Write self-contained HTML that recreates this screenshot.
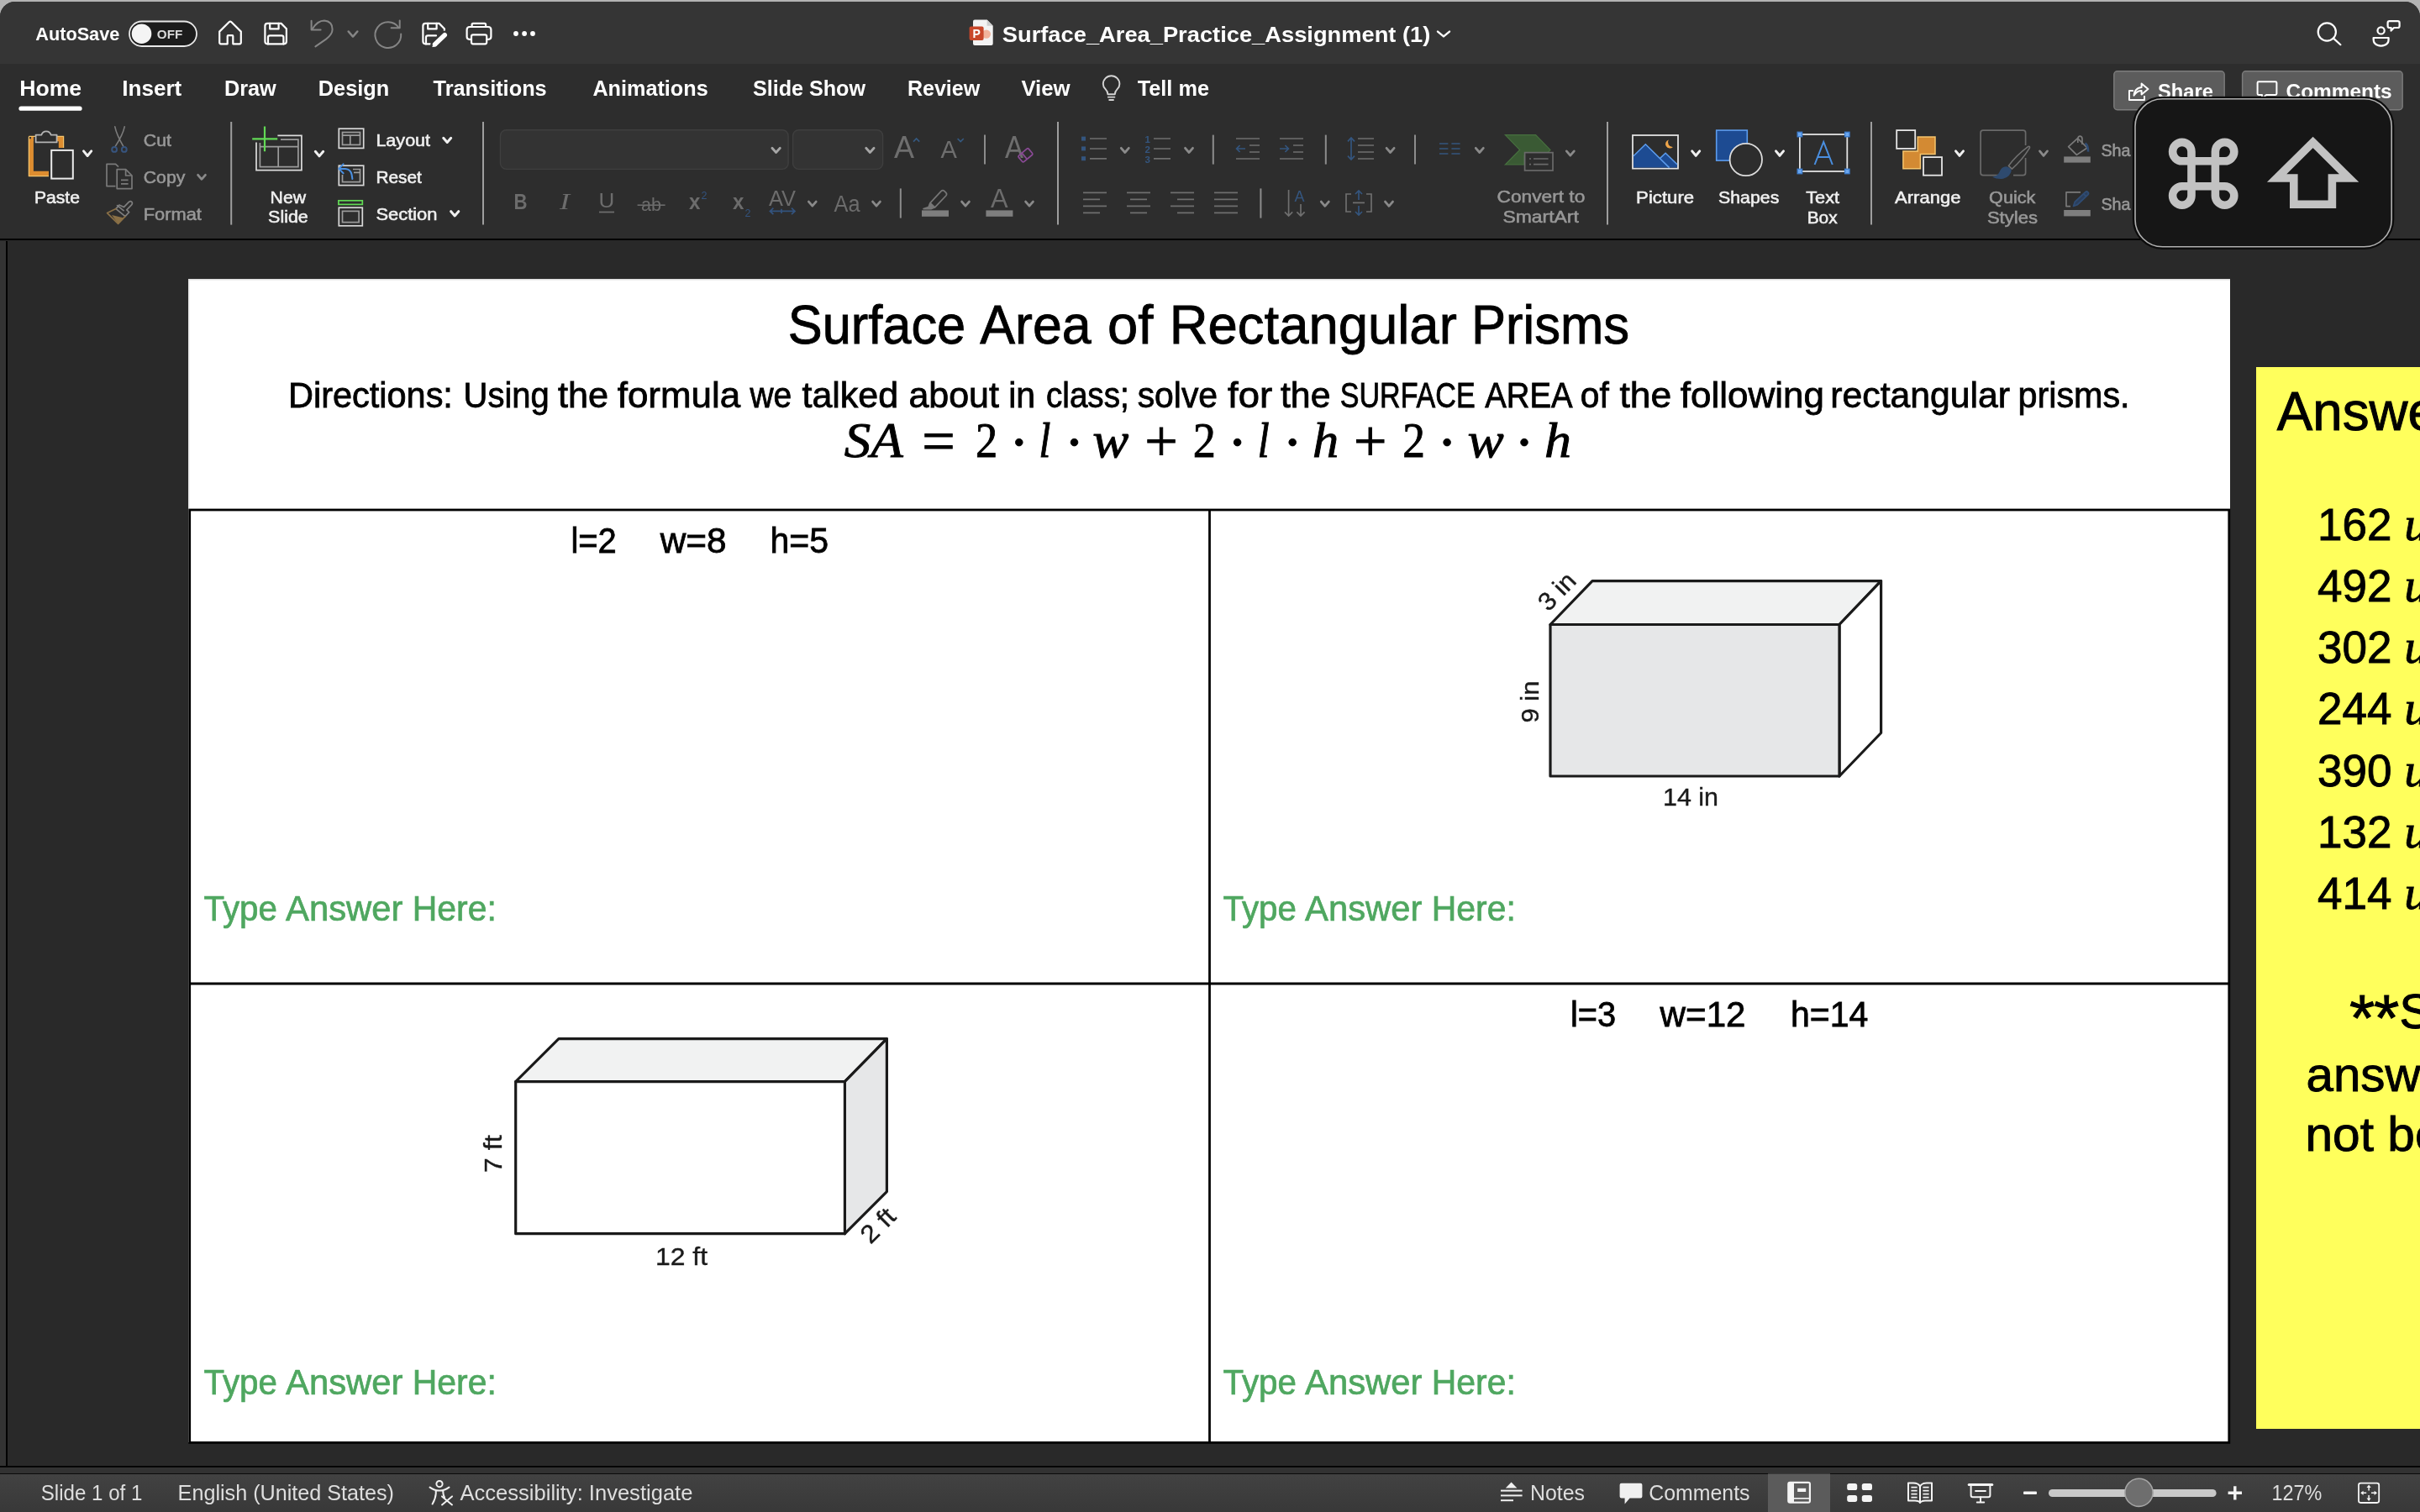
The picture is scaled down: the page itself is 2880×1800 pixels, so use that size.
<!DOCTYPE html>
<html lang="en">
<head>
<meta charset="utf-8">
<title>Surface_Area_Practice_Assignment (1)</title>
<style>
html,body{margin:0;padding:0;}
body{width:2880px;height:1800px;overflow:hidden;background:#b4b4b4;font-family:"Liberation Sans",sans-serif;position:relative;}
#win{position:absolute;left:0;top:2px;width:2880px;height:1798px;background:#292929;border-radius:18px 18px 0 0;overflow:hidden;}
#titlebar{position:absolute;left:0;top:0;width:2880px;height:74px;background:#353535;}
#ribbon{position:absolute;left:0;top:74px;width:2880px;height:208px;background:#2d2d2d;}
#ribbonline{position:absolute;left:0;top:282px;width:2880px;height:2px;background:#000;}
#canvas{position:absolute;left:0;top:284px;width:2880px;height:1460px;background:#292929;}
#leftstrip{position:absolute;left:0;top:285px;width:7px;height:1460px;background:#333;}
#leftline{position:absolute;left:7px;top:285px;width:2px;height:1460px;background:#000;}
#slide{position:absolute;left:224px;top:330px;width:2430px;height:1385px;background:#fff;box-shadow:0 1.5px 0 0 #dedede inset, 1.5px 0 0 0 #e4e4e4 inset;}
#answers{position:absolute;left:2685px;top:435px;width:195px;height:1264px;background:#ffff5c;}
#canvasline{position:absolute;left:0;top:1742.5px;width:2880px;height:2px;background:#050505;}
#statusgap{position:absolute;left:0;top:1744.5px;width:2880px;height:8px;background:#323232;border-bottom:1.5px solid #0a0a0a;box-sizing:border-box;}
#statusbar{position:absolute;left:0;top:1752.5px;width:2880px;height:46px;background:linear-gradient(#424242,#383838);}
#ov{position:absolute;left:0;top:0;width:2880px;height:1800px;will-change:transform;}
text{font-family:"Liberation Sans",sans-serif;}
.lbl{font-size:20.4px;fill:#f0f0f0;stroke:#f0f0f0;stroke-width:.55px;}
.dis{fill:#989898;stroke:#989898;}
.sep{stroke:#9e9e9e;stroke-width:2;}
.ssep{stroke:#8c8c8c;stroke-width:2;}
.chev{fill:none;stroke:#f0f0f0;stroke-width:3;stroke-linecap:round;stroke-linejoin:round;}
.chevd{fill:none;stroke:#8a8a8a;stroke-width:2.8;stroke-linecap:round;stroke-linejoin:round;}
.ser{font-family:"Liberation Serif",serif;}
.b{font-weight:700;}
.i{font-style:italic;}
</style>
</head>
<body>
<div id="win">
  <div id="titlebar"></div>
  <div id="ribbon"></div>
  <div id="ribbonline"></div>
  <div id="canvas"></div>
  <div id="leftstrip"></div>
  <div id="leftline"></div>
  <div id="slide"></div>
  <div id="answers"></div>
  <div id="canvasline"></div>
  <div id="statusgap"></div>
  <div id="statusbar"></div>
</div>
<svg id="ov" width="2880" height="1800" viewBox="0 0 2880 1800">
<defs><clipPath id="clipAns"><rect x="2685" y="437" width="195" height="1264"/></clipPath></defs>
<!--SLIDE-->
<g id="slidecontent">
  <!-- table -->
  <g fill="none" stroke="#000" stroke-width="2.8">
    <rect x="225.7" y="607" width="2427.1" height="1110.4"/>
    <line x1="1439.5" y1="607" x2="1439.5" y2="1717"/>
    <line x1="226" y1="1171" x2="2653" y2="1171"/>
  </g>
  <g stroke="#000" stroke-width=".9">
  <text x="937.8" y="409.4" font-size="64.5" textLength="211.4" lengthAdjust="spacingAndGlyphs">Surface</text>
  <text x="1166.3" y="409.4" font-size="64.5" textLength="132.4" lengthAdjust="spacingAndGlyphs">Area</text>
  <text x="1318.0" y="409.4" font-size="64.5" textLength="54.3" lengthAdjust="spacingAndGlyphs">of</text>
  <text x="1391.7" y="409.4" font-size="64.5" textLength="342.1" lengthAdjust="spacingAndGlyphs">Rectangular</text>
  <text x="1750.9" y="409.4" font-size="64.5" textLength="188.2" lengthAdjust="spacingAndGlyphs">Prisms</text>
  </g>
  <g stroke="#000" stroke-width=".8">
  <text x="343.0" y="484.5" font-size="41.6" textLength="195.9" lengthAdjust="spacingAndGlyphs">Directions:</text>
  <text x="551.6" y="484.5" font-size="41.6" textLength="102.2" lengthAdjust="spacingAndGlyphs">Using</text>
  <text x="664.0" y="484.5" font-size="41.6" textLength="60.1" lengthAdjust="spacingAndGlyphs">the</text>
  <text x="734.7" y="484.5" font-size="41.6" textLength="146.4" lengthAdjust="spacingAndGlyphs">formula</text>
  <text x="892.5" y="484.5" font-size="41.6" textLength="49.7" lengthAdjust="spacingAndGlyphs">we</text>
  <text x="954.5" y="484.5" font-size="41.6" textLength="114.6" lengthAdjust="spacingAndGlyphs">talked</text>
  <text x="1081.4" y="484.5" font-size="41.6" textLength="107.5" lengthAdjust="spacingAndGlyphs">about</text>
  <text x="1200.2" y="484.5" font-size="41.6" textLength="31.9" lengthAdjust="spacingAndGlyphs">in</text>
  <text x="1245.0" y="484.5" font-size="41.6" textLength="98.7" lengthAdjust="spacingAndGlyphs">class;</text>
  <text x="1353.7" y="484.5" font-size="41.6" textLength="95.4" lengthAdjust="spacingAndGlyphs">solve</text>
  <text x="1461.1" y="484.5" font-size="41.6" textLength="53.0" lengthAdjust="spacingAndGlyphs">for</text>
  <text x="1524.0" y="484.5" font-size="41.6" textLength="59.4" lengthAdjust="spacingAndGlyphs">the</text>
  <text x="1594.7" y="484.5" font-size="41.6" textLength="161.0" lengthAdjust="spacingAndGlyphs">SURFACE</text>
  <text x="1767.2" y="484.5" font-size="41.6" textLength="104.3" lengthAdjust="spacingAndGlyphs">AREA</text>
  <text x="1880.8" y="484.5" font-size="41.6" textLength="34.0" lengthAdjust="spacingAndGlyphs">of</text>
  <text x="1927.5" y="484.5" font-size="41.6" textLength="61.7" lengthAdjust="spacingAndGlyphs">the</text>
  <text x="1999.8" y="484.5" font-size="41.6" textLength="171.2" lengthAdjust="spacingAndGlyphs">following</text>
  <text x="2178.3" y="484.5" font-size="41.6" textLength="213.8" lengthAdjust="spacingAndGlyphs">rectangular</text>
  <text x="2401.5" y="484.5" font-size="41.6" textLength="133.1" lengthAdjust="spacingAndGlyphs">prisms.</text>
  <text x="679.4" y="657.6" font-size="42" textLength="54.4" lengthAdjust="spacingAndGlyphs">l=2</text>
  <text x="785.7" y="657.6" font-size="42" textLength="78.8" lengthAdjust="spacingAndGlyphs">w=8</text>
  <text x="916.4" y="657.6" font-size="42" textLength="69.6" lengthAdjust="spacingAndGlyphs">h=5</text>
  <text x="1868.9" y="1221.5" font-size="42" textLength="54.2" lengthAdjust="spacingAndGlyphs">l=3</text>
  <text x="1975.6" y="1221.5" font-size="42" textLength="101.9" lengthAdjust="spacingAndGlyphs">w=12</text>
  <text x="2130.9" y="1221.5" font-size="42" textLength="92.4" lengthAdjust="spacingAndGlyphs">h=14</text>
  </g>
  <g stroke="#000" stroke-width=".9">
    <text class="ser i" x="1004.7" y="544" font-size="59" textLength="70.0" lengthAdjust="spacingAndGlyphs">SA</text>
  <text class="ser" x="1117.1" y="549.4" font-size="70" text-anchor="middle">=</text>
  <text class="ser" x="1160.9" y="544" font-size="59" textLength="26.2" lengthAdjust="spacingAndGlyphs">2</text>
  <circle cx="1212.8" cy="526.6" r="4.3"/>
  <text class="ser i" x="1236.3" y="544" font-size="59" textLength="14.2" lengthAdjust="spacingAndGlyphs">l</text>
  <circle cx="1278.5" cy="526.6" r="4.3"/>
  <text class="ser i" x="1300.2" y="544" font-size="59" textLength="43.1" lengthAdjust="spacingAndGlyphs">w</text>
  <text class="ser" x="1381.9" y="549.4" font-size="70" text-anchor="middle">+</text>
  <text class="ser" x="1419.8" y="544" font-size="59" textLength="27.1" lengthAdjust="spacingAndGlyphs">2</text>
  <circle cx="1472.6" cy="526.6" r="4.3"/>
  <text class="ser i" x="1496.5" y="544" font-size="59" textLength="14.2" lengthAdjust="spacingAndGlyphs">l</text>
  <circle cx="1538.2" cy="526.6" r="4.3"/>
  <text class="ser i" x="1562.1" y="544" font-size="59" textLength="31.2" lengthAdjust="spacingAndGlyphs">h</text>
  <text class="ser" x="1630.8" y="549.4" font-size="70" text-anchor="middle">+</text>
  <text class="ser" x="1669.2" y="544" font-size="59" textLength="26.7" lengthAdjust="spacingAndGlyphs">2</text>
  <circle cx="1722.1" cy="526.6" r="4.3"/>
  <text class="ser i" x="1746.4" y="544" font-size="59" textLength="43.2" lengthAdjust="spacingAndGlyphs">w</text>
  <circle cx="1814.0" cy="526.6" r="4.3"/>
  <text class="ser i" x="1837.9" y="544" font-size="59" textLength="32.0" lengthAdjust="spacingAndGlyphs">h</text>
  </g>
  <g fill="#4fa760" stroke="#4fa760" stroke-width=".7" font-size="41.6">
    <text x="242.5" y="1095.7" textLength="87.4" lengthAdjust="spacingAndGlyphs">Type</text>
    <text x="340.0" y="1095.7" textLength="139.4" lengthAdjust="spacingAndGlyphs">Answer</text>
    <text x="490.8" y="1095.7" textLength="100.1" lengthAdjust="spacingAndGlyphs">Here:</text>
    <text x="1455.5" y="1095.7" textLength="87.4" lengthAdjust="spacingAndGlyphs">Type</text>
    <text x="1553.0" y="1095.7" textLength="139.4" lengthAdjust="spacingAndGlyphs">Answer</text>
    <text x="1703.8" y="1095.7" textLength="100.1" lengthAdjust="spacingAndGlyphs">Here:</text>
    <text x="242.5" y="1659.5" textLength="87.4" lengthAdjust="spacingAndGlyphs">Type</text>
    <text x="340.0" y="1659.5" textLength="139.4" lengthAdjust="spacingAndGlyphs">Answer</text>
    <text x="490.8" y="1659.5" textLength="100.1" lengthAdjust="spacingAndGlyphs">Here:</text>
    <text x="1455.5" y="1659.5" textLength="87.4" lengthAdjust="spacingAndGlyphs">Type</text>
    <text x="1553.0" y="1659.5" textLength="139.4" lengthAdjust="spacingAndGlyphs">Answer</text>
    <text x="1703.8" y="1659.5" textLength="100.1" lengthAdjust="spacingAndGlyphs">Here:</text>
  </g>
</g>
<g id="prisms" stroke="#1a1a1a" stroke-width="3.2" stroke-linejoin="round">
  <!-- prism 1 (top-right cell) -->
  <polygon points="1845,743.5 1895,691.7 2238.6,691.7 2189,743.5" fill="#f1f2f2"/>
  <polygon points="2189,743.5 2238.6,691.7 2238.6,872.5 2189,924" fill="#ffffff"/>
  <rect x="1845" y="743.5" width="344" height="180.5" fill="#e6e7e8"/>
  <!-- prism 2 (bottom-left cell) -->
  <polygon points="613.7,1287.6 664.9,1236.7 1055.4,1236.7 1005.4,1287.6" fill="#f1f2f2"/>
  <polygon points="1005.4,1287.6 1055.4,1236.7 1055.4,1418.6 1005.4,1468.7" fill="#e6e7e8"/>
  <rect x="613.7" y="1287.6" width="391.7" height="181.1" fill="#ffffff"/>
</g>
<g id="prismlabels" fill="#1a1a1a" stroke="#1a1a1a" stroke-width=".4" font-size="30" text-anchor="middle">
  <text x="2012" y="959.2" textLength="66" lengthAdjust="spacingAndGlyphs">14 in</text>
  <text transform="translate(1830.5,835.5) rotate(-90)" textLength="50" lengthAdjust="spacingAndGlyphs">9 in</text>
  <text transform="translate(1860,711) rotate(-46)" textLength="50" lengthAdjust="spacingAndGlyphs">3 in</text>
  <text x="811" y="1506" textLength="62" lengthAdjust="spacingAndGlyphs">12 ft</text>
  <text transform="translate(596.5,1373.8) rotate(-90)" textLength="45" lengthAdjust="spacingAndGlyphs">7 ft</text>
  <text transform="translate(1052,1466) rotate(-45)" textLength="45" lengthAdjust="spacingAndGlyphs">2 ft</text>
</g>
<g id="answerstext" clip-path="url(#clipAns)" stroke="#000" stroke-width=".9">
  <text x="2709.8" y="512.3" font-size="64.5" stroke-width="1" textLength="262" lengthAdjust="spacingAndGlyphs">Answers:</text>
  <g font-size="53">
    <text x="2758" y="642.7">162 <tspan class="ser i" font-size="58">u</tspan></text>
    <text x="2758" y="715.9">492 <tspan class="ser i" font-size="58">u</tspan></text>
    <text x="2758" y="789.1">302 <tspan class="ser i" font-size="58">u</tspan></text>
    <text x="2758" y="862.3">244 <tspan class="ser i" font-size="58">u</tspan></text>
    <text x="2758" y="935.5">390 <tspan class="ser i" font-size="58">u</tspan></text>
    <text x="2758" y="1008.7">132 <tspan class="ser i" font-size="58">u</tspan></text>
    <text x="2758" y="1081.9">414 <tspan class="ser i" font-size="58">u</tspan></text>
  </g>
  <g font-size="57">
    <text x="2796" y="1239" font-size="78">*</text>
    <text x="2825" y="1239" font-size="78">*</text>
    <text x="2855.6" y="1224.4">Some</text>
    <text x="2744.5" y="1298.8" textLength="217" lengthAdjust="spacingAndGlyphs">answers</text>
    <text x="2743.5" y="1370.2" textLength="163" lengthAdjust="spacingAndGlyphs">not be</text>
  </g>
</g>
<g id="titlebaricons" fill="none" stroke="#fff" stroke-width="2.2" stroke-linecap="round" stroke-linejoin="round">
  <text x="42.3" y="47.9" font-size="22.5" class="b" fill="#fff" stroke="none" textLength="100" lengthAdjust="spacingAndGlyphs">AutoSave</text>
  <!-- toggle -->
  <rect x="154" y="25.5" width="80" height="29.5" rx="14.75" fill="#1c1c1c" stroke="#e8e8e8" stroke-width="1.8"/>
  <circle cx="168.5" cy="40.2" r="11.8" fill="#f4f4f4" stroke="none"/>
  <text x="186.8" y="46" font-size="15.5" class="b" fill="#d8d8d8" stroke="none" textLength="30.5" lengthAdjust="spacingAndGlyphs">OFF</text>
  <!-- home -->
  <path d="M261.2 37.6 L272.6 26.2 Q274 24.9 275.4 26.2 L286.8 37.6 V50.6 Q286.8 52.3 285.1 52.3 H277.3 V42.9 Q277.3 42.1 276.5 42.1 H271.5 Q270.7 42.1 270.7 42.9 V52.3 H262.9 Q261.2 52.3 261.2 50.6 Z"/>
  <!-- save -->
  <path d="M318.4 27.9 H334.6 L340.9 34.2 V49.3 Q340.9 52.3 337.9 52.3 H318.4 Q315.4 52.3 315.4 49.3 V30.9 Q315.4 27.9 318.4 27.9 Z"/>
  <path d="M321.2 27.9 V34.4 H331.6 V27.9"/>
  <path d="M319 52.3 V44.6 Q319 42.4 321.2 42.4 H335.2 Q337.4 42.4 337.4 44.6 V52.3"/>
  <!-- undo (disabled) -->
  <g stroke="#858585" stroke-width="2">
    <path d="M370.6 24.8 V35.6 H381.6"/>
    <path d="M371.6 34.6 Q378 24.6 386 24.6 Q395.6 25.6 395.6 35 Q395.6 41 388 46.6 L375.4 55.4"/>
    <path d="M414.6 37.4 L420 43.6 L425.4 37.4" stroke-width="2.4"/>
    <path d="M475.7 24.6 V33.2 H465.6"/>
    <path d="M474.6 33 A15.4 15.4 0 1 0 477.2 40.4"/>
  </g>
  <!-- save as -->
  <path d="M517.4 52.3 H506.4 Q503.4 52.3 503.4 49.3 V30.9 Q503.4 27.9 506.4 27.9 H522.6 L528.9 34.2 V37.4"/>
  <path d="M509.2 27.9 V34.4 H519.6 V27.9"/>
  <path d="M507 52.3 V44.6 Q507 42.4 509.2 42.4 H519"/>
  <path d="M529.4 41.6 L517.2 53.2" stroke="#353535" stroke-width="10"/>
  <path d="M529.2 41.8 L517.6 52.8" stroke-width="5.6"/>
  <path d="M516.6 51.6 L514.8 55.6 L519 54.4 Z" fill="#fff" stroke-width="1"/>
  <!-- print -->
  <path d="M561.6 31.6 V29.4 Q561.6 27.9 563.1 27.9 H576.6 Q578.1 27.9 578.1 29.4 V31.6"/>
  <path d="M560.8 46.8 H558.6 Q555.6 46.8 555.6 43.8 V35.4 Q555.6 32 559 32 H581 Q584.4 32 584.4 35.4 V43.8 Q584.4 46.8 581.4 46.8 H579.4"/>
  <rect x="561" y="41.4" width="18.2" height="10.9" rx="2"/>
  <!-- dots -->
  <g fill="#fff" stroke="none"><circle cx="614" cy="40" r="2.9"/><circle cx="624.1" cy="40" r="2.9"/><circle cx="634" cy="40" r="2.9"/></g>
  <!-- doc icon -->
  <g stroke="none">
    <path d="M1160 23.6 H1174.6 L1181.7 30.8 V52 Q1181.7 54.1 1179.6 54.1 H1160 Q1158 54.1 1158 52 V25.6 Q1158 23.6 1160 23.6 Z" fill="#f3f3f3"/>
    <path d="M1174.6 23.6 L1181.7 30.8 H1174.6 Z" fill="#cfcfcf"/>
    <circle cx="1173.8" cy="40.6" r="5.2" fill="#f2b49c"/>
    <rect x="1153.6" y="31.6" width="17" height="16.4" rx="2" fill="#c8472a"/>
    <text x="1157.6" y="45.2" font-size="14" class="b" fill="#fff">P</text>
  </g>
  <text x="1192.8" y="49.7" font-size="26.5" class="b" fill="#fff" stroke="none" textLength="509.6" lengthAdjust="spacingAndGlyphs">Surface_Area_Practice_Assignment (1)</text>
  <path d="M1711 37.6 L1718 43.4 L1725 37.6" stroke-width="2.4"/>
  <!-- search -->
  <circle cx="2769.3" cy="38" r="10.6"/>
  <path d="M2777 45.6 L2785.4 53.2"/>
  <!-- person/comment -->
  <circle cx="2833.6" cy="36.4" r="4.1"/>
  <path d="M2824.6 45 H2842.6 Q2843.4 54.4 2833.6 54.6 Q2824 54.4 2824.6 45 Z"/>
  <path d="M2843.6 25.2 H2853.6 Q2855.6 25.2 2855.6 27.2 V31 Q2855.6 33 2853.6 33 H2849 L2845.6 36.6 V33 H2843.6 Q2841.6 33 2841.6 31 V27.2 Q2841.6 25.2 2843.6 25.2 Z" fill="#353535"/>
</g>
<g id="tabs" fill="#fff" font-size="25">
  <text class="b" x="23.2" y="113.8" textLength="74" lengthAdjust="spacingAndGlyphs">Home</text>
  <rect x="22.4" y="126.6" width="75.2" height="5.2" rx="2.6"/>
  <g class="b">
  <text x="145.2" y="113.8" textLength="71.1" lengthAdjust="spacingAndGlyphs">Insert</text>
  <text x="266.9" y="113.8" textLength="61.9" lengthAdjust="spacingAndGlyphs">Draw</text>
  <text x="378.8" y="113.8" textLength="84.5" lengthAdjust="spacingAndGlyphs">Design</text>
  <text x="515.6" y="113.8" textLength="135.1" lengthAdjust="spacingAndGlyphs">Transitions</text>
  <text x="705.4" y="113.8" textLength="137.3" lengthAdjust="spacingAndGlyphs">Animations</text>
  <text x="895.9" y="113.8" textLength="134.1" lengthAdjust="spacingAndGlyphs">Slide Show</text>
  <text x="1079.9" y="113.8" textLength="86.4" lengthAdjust="spacingAndGlyphs">Review</text>
  <text x="1215.4" y="113.8" textLength="58.3" lengthAdjust="spacingAndGlyphs">View</text>
  <text x="1353.7" y="113.8" textLength="85.3" lengthAdjust="spacingAndGlyphs">Tell me</text>
  </g>
  <!-- bulb -->
  <g fill="none" stroke="#d4d4d4" stroke-width="1.9" stroke-linecap="round" stroke-linejoin="round">
    <path d="M1318.4 112.2 Q1318.2 108.8 1315.6 106.2 Q1312.8 103.4 1312.8 100 A9.8 9.8 0 0 1 1332.4 100 Q1332.4 103.4 1329.6 106.2 Q1327 108.8 1326.8 112.2 Z"/>
    <path d="M1318.8 115.6 H1326.4 M1320.2 119 H1325"/>
  </g>
</g>
<g id="rb-clip">
  <!-- paste -->
  <defs><linearGradient id="og" x1="0" y1="0" x2="1" y2="0"><stop offset="0" stop-color="#f3bf63"/><stop offset=".25" stop-color="#d9872c"/><stop offset="1" stop-color="#e39a3a"/></linearGradient></defs>
  <path d="M55 165.3 H72.8 V176 M36.9 165.3 H40 M36.9 165.3 V206.7 H58" fill="none" stroke="#dd8d30" stroke-width="6"/>
  <path d="M34.4 162.4 V209.6 H58 M34.4 162.4 H42 M66 162.4 H75.6 V176" fill="none" stroke="#f5c56c" stroke-width="1.2"/>
  <path d="M42.6 169.4 V160.6 H49.4 A5.8 5.8 0 0 1 60.6 160.6 H67.6 V169.4 Z" fill="#2d2d2d" stroke="#b4b4b4" stroke-width="1.8" stroke-linejoin="round"/>
  <rect x="61.2" y="178.9" width="25.6" height="33.7" fill="#2d2d2d" stroke="#ebebeb" stroke-width="2"/>
  <path class="chev" d="M99.5 179.9 L104.1 185.5 L108.7 179.9"/>
  <text class="lbl" x="40.9" y="241.5" textLength="54.1" lengthAdjust="spacingAndGlyphs">Paste</text>
  <!-- cut -->
  <g fill="none" stroke="#7c7c7c" stroke-width="1.6" stroke-linecap="round">
    <path d="M136.8 150.8 Q138.6 160 147 174.6 M148.2 150.8 Q146.4 160 137 174.6"/>
    <circle cx="136.1" cy="177.9" r="2.9" stroke="#37547e" stroke-width="2"/>
    <circle cx="147.8" cy="177.9" r="2.9" stroke="#37547e" stroke-width="2"/>
  </g>
  <text class="lbl dis" x="170.8" y="173.5" textLength="33.1" lengthAdjust="spacingAndGlyphs">Cut</text>
  <!-- copy -->
  <g fill="none" stroke="#7a7a7a" stroke-width="1.7" stroke-linejoin="round">
    <path d="M137.4 221.6 H127 V195.4 H137.6 L141 198.6"/>
    <path d="M139.2 201.6 H149.6 L157 209 V224.6 H139.2 Z"/>
    <path d="M149.6 201.6 V209 H157"/>
    <path d="M144 214.4 H152.6 M144 218.8 H152.6"/>
  </g>
  <text class="lbl dis" x="170.8" y="218.1" textLength="49.5" lengthAdjust="spacingAndGlyphs">Copy</text>
  <path class="chevd" d="M235.6 208.3 L240.0 213.3 L244.4 208.3"/>
  <!-- format -->
  <g fill="none" stroke="#7e7e7e" stroke-width="1.7" stroke-linejoin="round" stroke-linecap="round">
    <path d="M139.6 244.6 L147 250.6 M147.4 246.6 L153.4 240.4 Q155.6 238.6 157 240.6 Q158 242.4 156.6 243.8 L150.8 249.8 L153.6 252.6 L149 257.6 L138 248.6 L141.8 244 Z"/>
    <path d="M138 248.6 L127.6 253.6 L140.6 266.4 L149 257.6" stroke="#8a7046"/>
    <path d="M133 256 L147.4 259.4 L140.6 266.4 Z" fill="#8a7046" stroke="none"/>
  </g>
  <text class="lbl dis" x="170.8" y="261.6" textLength="69" lengthAdjust="spacingAndGlyphs">Format</text>
  <line class="sep" x1="275.2" y1="145" x2="275.2" y2="267.6"/>
</g>
<g id="rb-slides">
  <g fill="none" stroke-width="1.7">
    <path d="M330.4 161.3 H358.9 V202.7 H305 V169.4" stroke="#dcdcdc"/>
    <path d="M334 166.2 H354.9 V198.7 H309.4 V170" stroke="#9c9c9c"/>
    <path d="M309.4 174.7 H354.9 M331.2 174.7 V198.7" stroke="#9c9c9c"/>
    <path d="M300.2 165.3 H330.2 M315 150.6 V180.2" stroke="#62d955" stroke-width="2.2"/>
  </g>
  <path class="chev" d="M375.3 180.3 L380.0 185.9 L384.7 180.3"/>
  <text class="lbl" x="321.6" y="241.6" textLength="42.4" lengthAdjust="spacingAndGlyphs">New</text>
  <text class="lbl" x="319.1" y="265.2" textLength="47.7" lengthAdjust="spacingAndGlyphs">Slide</text>
  <!-- layout -->
  <g fill="none" stroke-width="1.7">
    <rect x="403.3" y="153.2" width="29.4" height="23.2" stroke="#d8d8d8"/>
    <rect x="407.5" y="157.5" width="21" height="14.9" stroke="#9c9c9c"/>
    <path d="M407.5 161.2 H428.5 M416.8 161.2 V172.4" stroke="#9c9c9c"/>
  </g>
  <text class="lbl" x="447.4" y="173.5" textLength="64.7" lengthAdjust="spacingAndGlyphs">Layout</text>
  <path class="chev" d="M527.7 164.3 L532.2 169.5 L536.7 164.3"/>
  <!-- reset -->
  <g fill="none" stroke-width="1.7">
    <rect x="403.3" y="197.2" width="29.4" height="23.4" stroke="#d8d8d8"/>
    <path d="M420 201.5 H428.5 V216.7 H407.5 V208" stroke="#9c9c9c"/>
    <path d="M421 205.4 H428.5" stroke="#9c9c9c"/>
    <path d="M408.6 195.4 L403.4 200.9 L408.6 206.2 M403.8 200.9 H411 Q417.4 201.4 418.6 208 L419.4 213" stroke="#4a90e2" stroke-width="2" stroke-linecap="round" stroke-linejoin="round"/>
  </g>
  <text class="lbl" x="447.4" y="217.5" textLength="54.5" lengthAdjust="spacingAndGlyphs">Reset</text>
  <!-- section -->
  <g fill="none" stroke-width="1.7">
    <rect x="402.9" y="238.8" width="28.4" height="4.6" stroke="#62d955"/>
    <rect x="403.3" y="247.2" width="28" height="21.6" stroke="#d8d8d8"/>
    <rect x="407.5" y="251.4" width="19.6" height="13.2" stroke="#9c9c9c"/>
  </g>
  <text class="lbl" x="447.4" y="261.5" textLength="73.1" lengthAdjust="spacingAndGlyphs">Section</text>
  <path class="chev" d="M536.7 251.7 L541.2 256.9 L545.7 251.7"/>
  <line class="sep" x1="575" y1="145" x2="575" y2="267.6"/>
</g>
<g id="rb-font">
  <rect x="595.5" y="154.8" width="342.6" height="46.6" rx="7" fill="#333333" stroke="#3f3f3f" stroke-width="1.4"/>
  <rect x="943.6" y="154.8" width="107" height="46.6" rx="7" fill="#333333" stroke="#3f3f3f" stroke-width="1.4"/>
  <path class="chevd" stroke="#a8a8a8" d="M918.9 176.3 L923.6 181.5 L928.3 176.3" style="stroke:#a6a6a6"/>
  <path class="chevd" d="M1030.7 176.3 L1035.4 181.5 L1040.1 176.3" style="stroke:#a6a6a6"/>
  <g fill="#6e6e6e">
    <text x="1064" y="188.4" font-size="36.5" textLength="24" lengthAdjust="spacingAndGlyphs">A</text>
    <text x="1119.6" y="188.4" font-size="29" textLength="19.4" lengthAdjust="spacingAndGlyphs">A</text>
    <text x="1196" y="187.6" font-size="36.5" textLength="22" lengthAdjust="spacingAndGlyphs">A</text>
  </g>
  <path d="M1087 168.6 L1090.6 165 L1094.2 168.6" fill="none" stroke="#355980" stroke-width="1.7"/>
  <path d="M1139.6 165 L1143.2 168.6 L1146.8 165" fill="none" stroke="#355980" stroke-width="1.7"/>
  <line class="ssep" x1="1172" y1="160.6" x2="1172" y2="195.6"/>
  <g fill="none" stroke="#8a4a96" stroke-width="1.7" stroke-linejoin="round" transform="rotate(-40 1220.4 184.8)"><rect x="1212.6" y="180" width="15.6" height="9.6" rx="1.6"/><path d="M1218.8 180 V189.6"/></g>
  <line class="sep" x1="1259" y1="145" x2="1259" y2="267.6"/>
  <!-- row2 -->
  <g fill="#6c6c6c">
    <text class="b" x="611.4" y="248.8" font-size="25" textLength="16" lengthAdjust="spacingAndGlyphs">B</text>
    <text class="ser i" x="666" y="248.8" font-size="28" textLength="12" lengthAdjust="spacingAndGlyphs">I</text>
    <text x="712.6" y="247.2" font-size="24" textLength="18.8" lengthAdjust="spacingAndGlyphs">U</text>
    <rect x="713" y="251.6" width="18" height="1.8"/>
    <text x="763" y="251" font-size="22" textLength="24" lengthAdjust="spacingAndGlyphs">ab</text>
    <rect x="758.6" y="243.4" width="33" height="1.6"/>
    <text class="b" x="820" y="249.4" font-size="25" textLength="13.4" lengthAdjust="spacingAndGlyphs">x</text>
    <text class="b" x="872" y="249.4" font-size="25" textLength="13.4" lengthAdjust="spacingAndGlyphs">x</text>
    <text x="915" y="245" font-size="26" textLength="32" lengthAdjust="spacingAndGlyphs">AV</text>
    <text x="992.6" y="251.6" font-size="27" textLength="31" lengthAdjust="spacingAndGlyphs">Aa</text>
    <text x="1173.6" y="246.6" font-size="31" textLength="20.6" lengthAdjust="spacingAndGlyphs" transform="translate(5.4 0)">A</text>
    <rect x="1097" y="250.4" width="32" height="7.4" fill="#7e7e7e"/>
    <rect x="1173.4" y="250.4" width="32" height="7.4" fill="#7e7e7e"/>
  </g>
  <g fill="#33537e"><text x="834.6" y="236.6" font-size="12.5">2</text><text x="886.6" y="257.6" font-size="12.5">2</text></g>
  <path d="M916 251.4 H946.4 M920.4 247.6 L916.4 251.4 L920.4 255.2 M942 247.6 L946 251.4 L942 255.2 M930 248.8 V254" fill="none" stroke="#33537e" stroke-width="1.7"/>
  <path class="chevd" d="M962.4 240.1 L966.8 245.1 L971.2 240.1"/>
  <path class="chevd" d="M1038.6 240.1 L1043.0 245.1 L1047.4 240.1"/>
  <line class="ssep" x1="1071.8" y1="224.4" x2="1071.8" y2="259.6"/>
  <g fill="none" stroke="#767676" stroke-width="1.7" stroke-linejoin="round">
    <path d="M1107 241.6 L1120 227.6 Q1122 225.8 1124 227.6 L1125.8 229.4 Q1127.4 231.2 1125.8 233 L1112.6 246.8 Z"/>
    <path d="M1107 241.6 L1105 246.6 L1099 248.6 L1108 248.6 L1112.6 246.8" fill="#767676"/>
  </g>
  <path class="chevd" d="M1144.6 240.1 L1149.0 245.1 L1153.4 240.1"/>
  <path class="chevd" d="M1220.6 240.1 L1225.0 245.1 L1229.4 240.1"/>
</g>
<g id="rb-para">
  <g fill="#34557e"><rect x="1287" y="162.6" width="5" height="5"/><rect x="1287" y="174.4" width="5" height="5"/><rect x="1287" y="186.2" width="5" height="5"/></g>
  <path d="M1297 165 H1317 M1297 177 H1317 M1297 188.8 H1317" fill="none" stroke="#6f6f6f" stroke-width="1.7"/>
  <path class="chevd" d="M1334.3 176.3 L1338.8 181.5 L1343.3 176.3"/>
  <g fill="#34557e" font-size="11.5" class="b"><text x="1362.6" y="169.6">1</text><text x="1362.6" y="181.6">2</text><text x="1362.6" y="193.6">3</text></g>
  <path d="M1373 165 H1393 M1373 177 H1393 M1373 188.8 H1393" fill="none" stroke="#6f6f6f" stroke-width="1.7"/>
  <path class="chevd" d="M1410.5 176.3 L1415.0 181.5 L1419.5 176.3"/>
  <line class="ssep" x1="1443.8" y1="160.6" x2="1443.8" y2="195.6"/>
  <path d="M1471 165 H1499 M1487 173 H1499 M1487 181 H1499 M1471 189 H1499" fill="none" stroke="#6f6f6f" stroke-width="1.7"/>
  <path d="M1471.6 177 H1482 M1475.6 173 L1471.6 177 L1475.6 181" fill="none" stroke="#34557e" stroke-width="1.7"/>
  <path d="M1523 165 H1551 M1539 173 H1551 M1539 181 H1551 M1523 189 H1551" fill="none" stroke="#6f6f6f" stroke-width="1.7"/>
  <path d="M1523 177 H1533.4 M1529.4 173 L1533.4 177 L1529.4 181" fill="none" stroke="#34557e" stroke-width="1.7"/>
  <line class="ssep" x1="1577.8" y1="160.6" x2="1577.8" y2="195.6"/>
  <path d="M1616 165 H1635 M1616 173 H1635 M1616 181 H1635 M1616 189 H1635" fill="none" stroke="#6f6f6f" stroke-width="1.7"/>
  <path d="M1608 164 V190 M1604 168.4 L1608 164 L1612 168.4 M1604 185.6 L1608 190 L1612 185.6" fill="none" stroke="#34557e" stroke-width="1.7"/>
  <path class="chevd" d="M1650.1 176.3 L1654.6 181.5 L1659.1 176.3"/>
  <line class="ssep" x1="1684" y1="160.6" x2="1684" y2="195.6"/>
  <path d="M1713 171 H1723.4 M1713 177 H1723.4 M1713 183 H1723.4 M1727.4 171 H1737.6 M1727.4 177 H1737.6 M1727.4 183 H1737.6" fill="none" stroke="#34557e" stroke-width="1.7"/>
  <path class="chevd" d="M1756.3 176.3 L1760.8 181.5 L1765.3 176.3"/>
  <path d="M1791.4 160.6 H1827.6 L1845 178.4 L1838 185.6 H1814 V196 H1791.4 L1808.6 178.4 Z" fill="#3a5a34" stroke="#47703f" stroke-width="1.2"/>
  <rect x="1814.6" y="181.6" width="33.4" height="21.4" fill="#2d2d2d" stroke="#6a6a6a" stroke-width="1.7"/>
  <path d="M1820 189 H1822 M1825 189 H1842.6 M1820 195.6 H1822 M1825 195.6 H1842.6" fill="none" stroke="#6a6a6a" stroke-width="1.7"/>
  <path class="chevd" d="M1864.3 179.9 L1868.8 185.1 L1873.3 179.9"/>
  <text class="lbl dis" x="1781.5" y="241.3" textLength="104.8" lengthAdjust="spacingAndGlyphs">Convert to</text>
  <text class="lbl dis" x="1788.4" y="265" textLength="90.4" lengthAdjust="spacingAndGlyphs">SmartArt</text>
  <line class="sep" x1="1913" y1="145" x2="1913" y2="267.6"/>
  <path d="M1289 229.4 H1317 M1289 237.4 H1309 M1289 245.4 H1317 M1289 253.4 H1309" fill="none" stroke="#6f6f6f" stroke-width="1.7"/>
  <path d="M1341 229.4 H1369 M1345 237.4 H1365 M1341 245.4 H1369 M1345 253.4 H1365" fill="none" stroke="#6f6f6f" stroke-width="1.7"/>
  <path d="M1393 229.4 H1421 M1401 237.4 H1421 M1393 245.4 H1421 M1401 253.4 H1421" fill="none" stroke="#6f6f6f" stroke-width="1.7"/>
  <path d="M1445 229.4 H1473 M1445 237.4 H1473 M1445 245.4 H1473 M1445 253.4 H1473" fill="none" stroke="#6f6f6f" stroke-width="1.7"/>
  <line class="ssep" x1="1500.4" y1="224.4" x2="1500.4" y2="259.6"/>
  <path d="M1533.6 226 V257 M1529 252.4 L1533.6 257 L1538.2 252.4 M1548 243 V257 M1543.4 252.4 L1548 257 L1552.6 252.4" fill="none" stroke="#6f6f6f" stroke-width="1.7"/>
  <text x="1540.6" y="240" font-size="18" fill="#34557e">A</text>
  <path class="chevd" d="M1572.3 240.1 L1576.8 245.3 L1581.3 240.1"/>
  <path d="M1608 231 H1602 V252 H1608 M1626 231 H1632 V252 H1626 M1610 241.4 H1624" fill="none" stroke="#6f6f6f" stroke-width="1.7"/>
  <path d="M1617 227 V238 M1613 231 L1617 227 L1621 231 M1617 245 V256 M1613 252 L1617 256 L1621 252" fill="none" stroke="#34557e" stroke-width="1.7"/>
  <path class="chevd" d="M1648.5 240.1 L1653.0 245.3 L1657.5 240.1"/>
</g>
<g id="rb-insert">
  <!-- picture -->
  <rect x="1943" y="161" width="54" height="39.6" fill="#2d2d2d" stroke="#e2e2e2" stroke-width="1.8"/>
  <path d="M1944 185.8 L1958.3 171.8 L1975.4 188.6 L1982.1 182.2 L1996 195.8 V199.6 H1944 Z" fill="#1d4b92"/>
  <path d="M1944 185.8 L1958.3 171.8 L1986.6 199.6 M1975.4 188.6 L1982.1 182.2 L1996 195.8" fill="none" stroke="#5c9ced" stroke-width="1.5"/>
  <path d="M1985.8 166.4 A5.2 5.2 0 1 0 1991 175 A5.6 5.6 0 0 1 1985.8 166.4 Z" fill="#f0a64a"/>
  <path class="chev" d="M2013.7 179.9 L2018.2 185.3 L2022.7 179.9"/>
  <text class="lbl" x="1947.1" y="241.8" textLength="69" lengthAdjust="spacingAndGlyphs">Picture</text>
  <!-- shapes -->
  <rect x="2042.7" y="155.1" width="36.6" height="36" fill="#1d4b92" stroke="#5c9ced" stroke-width="1.6"/>
  <circle cx="2077.8" cy="190" r="19.2" fill="#2d2d2d" stroke="#dcdcdc" stroke-width="1.8"/>
  <path class="chev" d="M2113.5 179.9 L2118.0 185.3 L2122.5 179.9"/>
  <text class="lbl" x="2045" y="241.8" textLength="72.3" lengthAdjust="spacingAndGlyphs">Shapes</text>
  <!-- text box -->
  <rect x="2141.9" y="160" width="56.4" height="44" fill="none" stroke="#e2e2e2" stroke-width="1.8"/>
  <g fill="#6aa6ee" stroke="#3f7fd0" stroke-width="1.4"><rect x="2139.2" y="157.3" width="5.4" height="5.4"/><rect x="2195.6" y="157.3" width="5.4" height="5.4"/><rect x="2139.2" y="201.3" width="5.4" height="5.4"/><rect x="2195.6" y="201.3" width="5.4" height="5.4"/></g>
  <path d="M2159.6 196 L2170.2 169 L2180.8 196 M2163.4 187 H2177" fill="none" stroke="#4a8fe0" stroke-width="2"/>
  <text class="lbl" x="2149.2" y="241.8" textLength="39.9" lengthAdjust="spacingAndGlyphs">Text</text>
  <text class="lbl" x="2150.7" y="265.6" textLength="36" lengthAdjust="spacingAndGlyphs">Box</text>
  <line class="sep" x1="2227" y1="145" x2="2227" y2="267.6"/>
  <!-- arrange -->
  <path d="M2282.2 163 H2303 V183.6 H2285.4 V200.7 H2264.9 V180 H2282.2 Z" fill="#d38a33" stroke="#f6c56e" stroke-width="1.5"/>
  <rect x="2257.2" y="155.1" width="22" height="21.8" fill="#2d2d2d" stroke="#e6e6e6" stroke-width="1.8"/>
  <rect x="2289" y="187.1" width="22" height="21.6" fill="#2d2d2d" stroke="#e6e6e6" stroke-width="1.8"/>
  <path class="chev" d="M2327.5 179.9 L2332.0 185.3 L2336.5 179.9"/>
  <text class="lbl" x="2255.1" y="241.8" textLength="78.3" lengthAdjust="spacingAndGlyphs">Arrange</text>
  <!-- quick styles -->
  <path d="M2381 208.6 H2360 Q2357.1 208.6 2357.1 205.7 V158 Q2357.1 155.1 2360 155.1 H2407.6 Q2410.6 155.1 2410.6 158 V173 M2410.6 188 V205.7 Q2410.6 208.6 2407.6 208.6 H2396" fill="none" stroke="#6a6a6a" stroke-width="1.7"/>
  <path d="M2390.4 197.4 Q2399 185.4 2413.8 174.4 Q2416 173.8 2415.4 176.2 Q2406.6 190.6 2394.4 201.2 Z" fill="#2d2d2d" stroke="#707070" stroke-width="1.6" stroke-linejoin="round"/>
  <path d="M2388.6 198.4 Q2392.6 199.4 2393.8 203 Q2392.4 210.6 2384 212.8 Q2377 213.8 2371 210.8 Q2377.6 209.4 2379.6 204.6 Q2382.4 197.6 2388.6 198.4 Z" fill="#2e4a6e"/>
  <path class="chevd" d="M2427.5 179.9 L2432.0 185.3 L2436.5 179.9"/>
  <text class="lbl dis" x="2367.1" y="241.8" textLength="55.3" lengthAdjust="spacingAndGlyphs">Quick</text>
  <text class="lbl dis" x="2364.9" y="265.6" textLength="60.1" lengthAdjust="spacingAndGlyphs">Styles</text>
  <!-- shape fill / outline -->
  <g fill="none" stroke="#7a7a7a" stroke-width="1.7" stroke-linejoin="round">
    <path d="M2472.6 164.6 L2484 176 L2471.4 184.4 L2461.6 174.6 Z"/>
    <path d="M2472.8 170 V165 Q2473 162 2475.6 162.2 Q2478 162.6 2478 165.4 V172"/>
    <path d="M2481.6 170.4 Q2485.4 173.6 2485 180.6" stroke="#2f4c74" stroke-width="2.6"/>
    <path d="M2476 228.8 H2459 V245.6 H2464" />
    <path d="M2467.6 245.4 L2469.2 240.4 L2481.8 228.6 Q2483.4 227.4 2484.8 228.8 Q2486.2 230.4 2484.8 231.8 L2472.4 243.6 Z M2479.6 230.8 L2482.8 233.8" stroke="#2f4c74" stroke-width="1.8" fill="#2b3f5c"/>
  </g>
  <rect x="2456.2" y="186.4" width="31.6" height="7.2" fill="#7e7e7e"/>
  <rect x="2456.2" y="250" width="31.6" height="7.4" fill="#7e7e7e"/>
  <text class="lbl dis" x="2500.4" y="185.6" textLength="35.1" lengthAdjust="spacingAndGlyphs">Sha</text>
  <text class="lbl dis" x="2500.4" y="249.8" textLength="35.1" lengthAdjust="spacingAndGlyphs">Sha</text>
</g>
<g id="rb-share">
  <rect x="2515.8" y="84.8" width="131.4" height="46" rx="4" fill="#5c5c5c" stroke="#7c7c7c" stroke-width="1.4"/>
  <rect x="2668.6" y="84.8" width="190.6" height="46" rx="4" fill="#5c5c5c" stroke="#7c7c7c" stroke-width="1.4"/>
  <g fill="none" stroke="#fff" stroke-width="2" stroke-linejoin="round">
    <path d="M2539 108 H2534 V119 H2552 V114"/>
    <path d="M2539.6 113.6 Q2540.6 104.6 2548.6 104 V99.4 L2556.4 106 L2548.6 112.4 V108 Q2543 108 2539.6 113.6 Z"/>
    <path d="M2688 97.2 H2708 Q2709.4 97.2 2709.4 98.6 V111.6 Q2709.4 113 2708 113 H2697 L2692 117.6 V113 H2688 Q2686.6 113 2686.6 111.6 V98.6 Q2686.6 97.2 2688 97.2 Z"/>
  </g>
  <text class="b" x="2568" y="116.6" font-size="23" fill="#fff" textLength="65.9" lengthAdjust="spacingAndGlyphs">Share</text>
  <text class="b" x="2720.6" y="116.6" font-size="23" fill="#fff" textLength="126" lengthAdjust="spacingAndGlyphs">Comments</text>
</g>
<g id="status">
  <rect x="2104" y="1754.4" width="74" height="45.6" fill="#5b5b5b"/>
  <g fill="#dedede" font-size="25.4">
    <text x="48.8" y="1786" textLength="120.6" lengthAdjust="spacingAndGlyphs">Slide 1 of 1</text>
    <text x="211.6" y="1786" textLength="257.4" lengthAdjust="spacingAndGlyphs">English (United States)</text>
    <text x="547.5" y="1786" textLength="276.9" lengthAdjust="spacingAndGlyphs">Accessibility: Investigate</text>
    <text x="1821" y="1786" textLength="65" lengthAdjust="spacingAndGlyphs">Notes</text>
    <text x="1962.3" y="1786" textLength="120.2" lengthAdjust="spacingAndGlyphs">Comments</text>
    <text x="2703.4" y="1786" textLength="59.8" lengthAdjust="spacingAndGlyphs">127%</text>
  </g>
  <!-- accessibility icon -->
  <g fill="none" stroke="#f0f0f0" stroke-width="2" stroke-linecap="round" stroke-linejoin="round">
    <circle cx="523" cy="1766.6" r="3.6"/>
    <path d="M511.6 1770.6 Q517 1774.6 523 1774.4 Q529 1774.6 534.4 1770.6 M518.6 1774.4 Q519.6 1782 514.6 1790.4 M527.4 1774.4 Q527 1779 529 1782.6"/>
    <path d="M526 1781.4 L538 1791.4 M538 1781.4 L526 1791.4"/>
  </g>
  <!-- notes icon -->
  <g fill="#f0f0f0">
    <path d="M1798.6 1764.6 L1805.4 1771.6 H1791.8 Z"/>
    <rect x="1786" y="1773.6" width="25.6" height="2"/><rect x="1786" y="1779.4" width="25.6" height="2"/><rect x="1786" y="1785.2" width="15" height="2"/>
    <path d="M1929.6 1765.8 H1952.4 Q1954.4 1765.8 1954.4 1767.8 V1781.6 Q1954.4 1783.6 1952.4 1783.6 H1939.6 L1933.6 1790.4 V1783.6 H1929.6 Q1927.6 1783.6 1927.6 1781.6 V1767.8 Q1927.6 1765.8 1929.6 1765.8 Z"/>
  </g>
  <!-- normal view -->
  <rect x="2127.2" y="1763.8" width="27.8" height="26" rx="3" fill="#f4f4f4"/>
  <rect x="2135" y="1766" width="17.8" height="17" fill="#5b5b5b"/>
  <rect x="2135" y="1784.6" width="17.8" height="3" fill="#5b5b5b"/>
  <rect x="2139.2" y="1771.8" width="10" height="4.2" fill="#f4f4f4"/>
  <!-- grid -->
  <g fill="#f4f4f4"><rect x="2198.2" y="1766" width="12" height="8" rx="2.6"/><rect x="2215.8" y="1766" width="12.2" height="8" rx="2.6"/><rect x="2198.2" y="1779.9" width="12" height="8" rx="2.6"/><rect x="2215.8" y="1779.9" width="12.2" height="8" rx="2.6"/></g>
  <!-- book -->
  <g fill="none" stroke="#f4f4f4" stroke-width="2" stroke-linejoin="round">
    <path d="M2285 1769.6 Q2283 1765.6 2277 1765.6 H2271 V1786.6 H2279 Q2283.6 1786.6 2285 1789 Q2286.4 1786.6 2291 1786.6 H2299 V1765.6 H2293 Q2287 1765.6 2285 1769.6 V1788"/>
    <path d="M2274.4 1770.6 H2281.6 M2274.4 1774.6 H2281.6 M2274.4 1778.6 H2281.6 M2274.4 1782.6 H2281.6 M2288.4 1770.6 H2295.6 M2288.4 1774.6 H2295.6 M2288.4 1778.6 H2295.6 M2288.4 1782.6 H2295.6" stroke-width="1.6"/>
  </g>
  <!-- presenter -->
  <g fill="none" stroke="#f4f4f4" stroke-width="2" stroke-linecap="round" stroke-linejoin="round">
    <path d="M2343.2 1767.4 H2370.8" stroke-width="3"/>
    <path d="M2345.6 1768 V1780 Q2345.6 1782.2 2347.8 1782.2 H2366.2 Q2368.4 1782.2 2368.4 1780 V1768"/>
    <path d="M2351 1775 H2363" stroke-width="1.8"/>
    <path d="M2357 1782.2 V1788.4 M2352.8 1788.6 H2361.2"/>
  </g>
  <!-- zoom slider -->
  <rect x="2408" y="1775.6" width="16" height="3.4" rx="1" fill="#f4f4f4"/>
  <rect x="2438" y="1773" width="199.6" height="9" rx="4.5" fill="#c9c9c9"/>
  <circle cx="2545.5" cy="1776.8" r="16.6" fill="#6e6e6e" stroke="#a4a4a4" stroke-width="1.6"/>
  <path d="M2651.6 1777.3 H2668 M2659.8 1769.2 V1785.4" stroke="#f4f4f4" stroke-width="3.4" fill="none"/>
  <!-- fit -->
  <g fill="none" stroke="#f4f4f4" stroke-width="1.8" stroke-linejoin="round">
    <rect x="2807" y="1765.6" width="24.2" height="23.4" rx="2.4"/>
    <path d="M2819.1 1769 V1774.6 M2819.1 1780 V1785.6 M2810.6 1777.3 H2816.2 M2822 1777.3 H2827.6" stroke-width="1.5"/>
  </g>
  <g fill="#f4f4f4"><path d="M2819.1 1767.6 L2821.7 1771 H2816.5 Z M2819.1 1787 L2821.7 1783.6 H2816.5 Z M2809.2 1777.3 L2812.6 1774.7 V1779.9 Z M2829 1777.3 L2825.6 1774.7 V1779.9 Z"/></g>
</g>
<g id="keyoverlay">
  <rect x="2539.6" y="116.4" width="308" height="178.8" rx="34" fill="#161616" stroke="#0c0c0c" stroke-width="3.4"/>
  <rect x="2541" y="117.8" width="305.2" height="176" rx="32.6" fill="#161616" stroke="#b0b0b0" stroke-width="1.6"/>
  <g fill="none" stroke="#c2c2c2" stroke-width="9.6">
    <path d="M2608 193 V180.6 A11.2 11.2 0 1 0 2596.8 191.8 H2647.6 A11.2 11.2 0 1 0 2636.4 180.6 V233 A11.2 11.2 0 1 0 2647.6 221.8 H2596.8 A11.2 11.2 0 1 0 2608 233 Z"/>
    <path d="M2752.6 169.4 L2795.6 212 H2775.4 V243.2 H2729.8 V212 H2709.6 Z" stroke-linejoin="miter"/>
  </g>
</g>
</svg>
</body>
</html>
